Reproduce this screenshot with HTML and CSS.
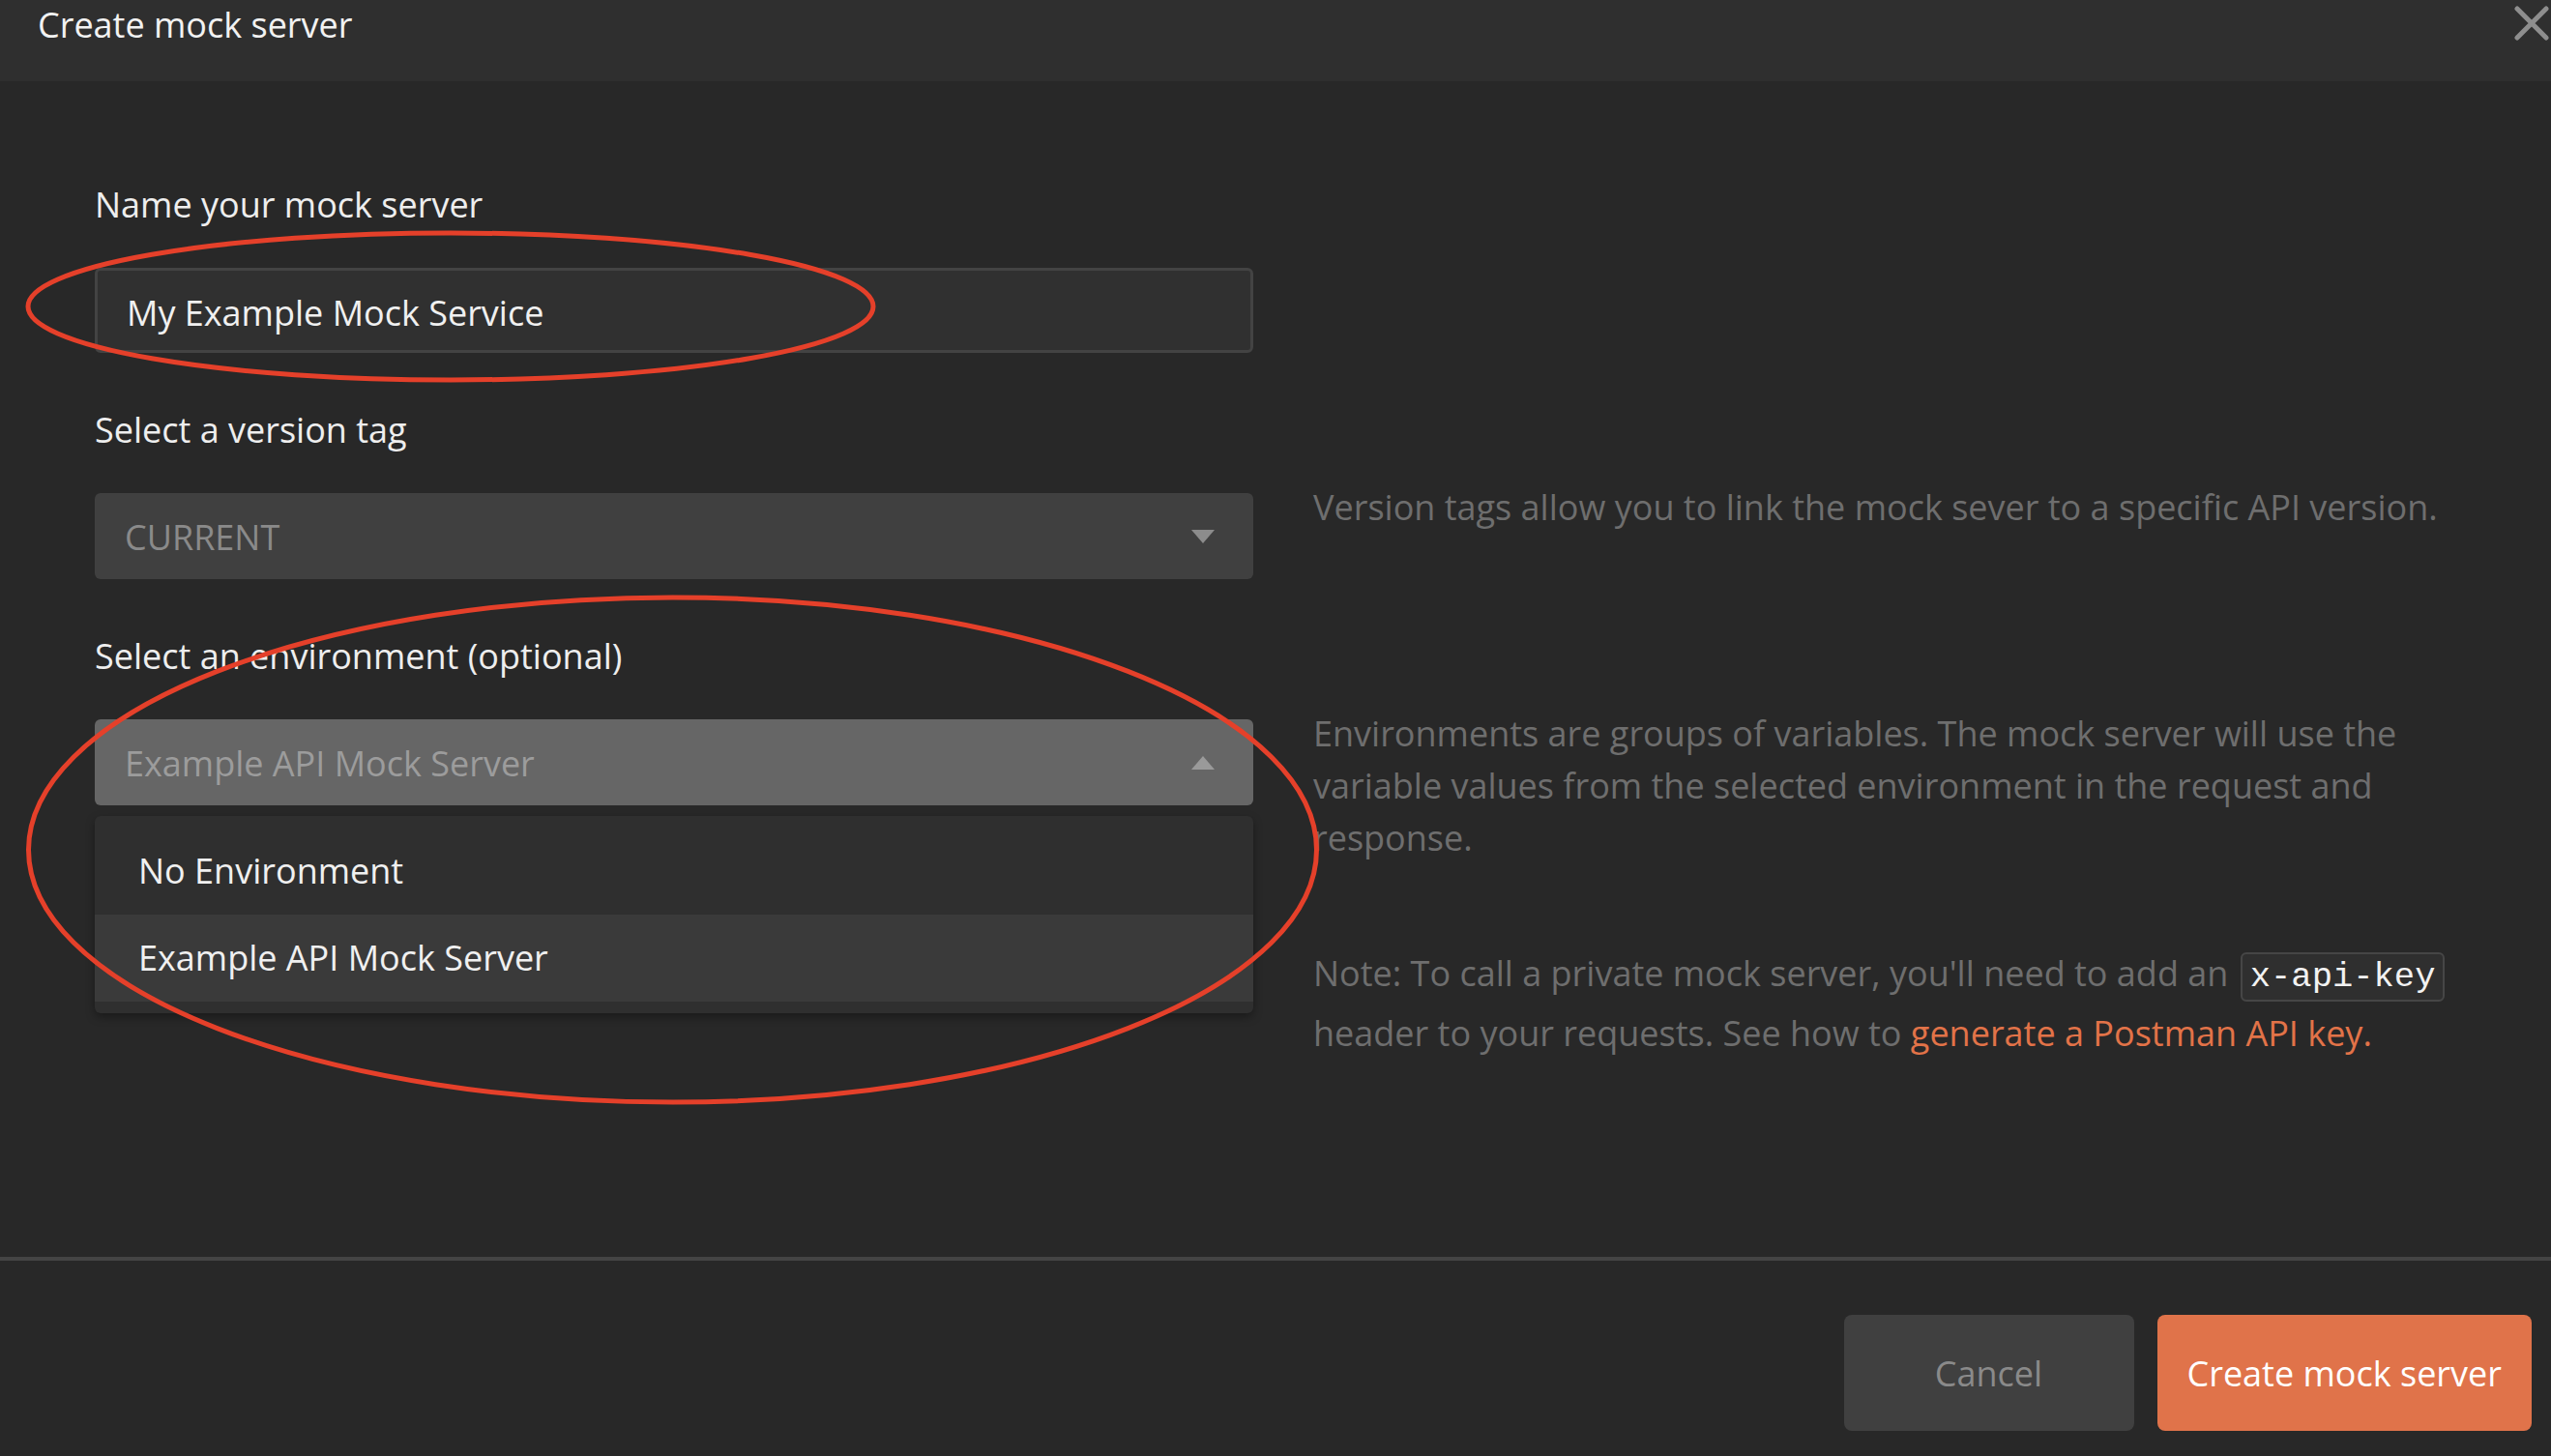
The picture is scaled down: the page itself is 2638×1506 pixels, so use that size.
FILE: index.html
```html
<!DOCTYPE html>
<html lang="en">
<head>
<meta charset="utf-8">
<title>Create mock server</title>
<link rel="stylesheet" href="styles.css">
</head>
<body>
<div class="modal">
  <header class="modal-header">
    <h1 class="modal-title">Create mock server</h1>
    <button class="close-btn" aria-label="Close">
      <svg width="36" height="36" viewBox="0 0 36 36"><path d="M3 3 L33 33 M33 3 L3 33" stroke="#8e8e8e" stroke-width="5" stroke-linecap="round" fill="none"/></svg>
    </button>
  </header>

  <main class="modal-body">
    <section class="field">
      <label class="field-label">Name your mock server</label>
      <div class="field-control">
        <div class="text-input">My Example Mock Service</div>
      </div>
    </section>

    <section class="field">
      <label class="field-label">Select a version tag</label>
      <div class="field-control">
        <div class="select">
          <span class="select-value">CURRENT</span>
          <svg class="caret" width="26" height="14" viewBox="0 0 26 14"><path d="M1 0 H25 L13 14 Z" fill="#8c8c8c"/></svg>
        </div>
      </div>
      <div class="field-help">
        <p>Version tags allow you to link the mock sever to a specific API version.</p>
      </div>
    </section>

    <section class="field">
      <label class="field-label">Select an environment (optional)</label>
      <div class="field-control">
        <div class="select select-open">
          <span class="select-value">Example API Mock Server</span>
          <svg class="caret" width="26" height="14" viewBox="0 0 26 14"><path d="M1 14 H25 L13 0 Z" fill="#9a9a9a"/></svg>
        </div>
        <ul class="menu">
          <li class="menu-item">No Environment</li>
          <li class="menu-item menu-item-active">Example API Mock Server</li>
        </ul>
      </div>
      <div class="field-help">
        <p>Environments are groups of variables. The mock server will use the variable values from the selected environment in the request and response.</p>
        <p class="note">Note: To call a private mock server, you'll need to add an <code class="code">x-api-key</code> header to your requests. See how to <a class="link" href="#">generate a Postman API key.</a></p>
      </div>
    </section>
  </main>

  <footer class="modal-footer">
    <button class="btn btn-secondary">Cancel</button>
    <button class="btn btn-primary">Create mock server</button>
  </footer>

  <svg class="annotations" width="2638" height="1506" viewBox="0 0 2638 1506">
    <ellipse cx="466" cy="317" rx="437" ry="76" fill="none" stroke="#e5402a" stroke-width="5"/>
    <ellipse cx="695.5" cy="879" rx="666" ry="261" fill="none" stroke="#e5402a" stroke-width="5"/>
  </svg>
</div>
</body>
</html>
```

FILE: styles.css
```css
* { box-sizing: border-box; }

html, body {
  margin: 0;
  padding: 0;
  background: #282828;
}

body {
  font-family: "Open Sans", "Noto Sans", sans-serif;
  font-size: 36px;
  color: #eeeeee;
}

.modal {
  position: relative;
  width: 2638px;
  height: 1506px;
  display: flex;
  flex-direction: column;
  overflow: hidden;
}

.modal-header {
  height: 84px;
  flex: none;
  background: #2f2f2f;
  display: flex;
  justify-content: space-between;
  align-items: flex-start;
  padding: 0 2px 0 39px;
}

.modal-title {
  margin: 0;
  font-size: 36px;
  font-weight: 400;
  line-height: 49px;
  margin-top: 1px;
  color: #f2f2f2;
}

.close-btn {
  background: none;
  border: 0;
  padding: 0;
  margin-top: 6px;
  width: 36px;
  height: 36px;
  display: block;
}
.close-btn svg { display: block; }

.modal-body {
  flex: 1;
  padding: 103px 98px 0 98px;
}

.field {
  display: grid;
  grid-template-columns: 1198px 1fr;
  column-gap: 62px;
  margin-bottom: 55px;
}

.field-label {
  grid-column: 1;
  grid-row: 1;
  line-height: 49px;
  margin-bottom: 41px;
  color: #eeeeee;
}

.field-control {
  grid-column: 1;
  grid-row: 2;
  position: relative;
  align-self: start;
}

.field-help {
  grid-column: 2;
  grid-row: 2;
  margin-top: -12px;
  color: #6e6e6e;
  line-height: 54px;
}
.field-help p { margin: 0; }

.text-input {
  height: 88px;
  border: 3px solid #434343;
  border-radius: 6px;
  background: #303030;
  padding: 5px 30px 0 30px;
  line-height: 77px;
  color: #f0f0f0;
}

.select {
  height: 89px;
  border-radius: 6px;
  background: #404040;
  padding: 2px 39px 0 31px;
  display: flex;
  align-items: center;
  justify-content: space-between;
  color: #8a8a8a;
}
.select .caret { display: block; flex: none; margin-top: -2px; }
.select-open {
  background: #666666;
  color: #9c9c9c;
}
.select-value { line-height: 49px; }

.menu {
  position: absolute;
  top: calc(100% + 11px);
  left: 0;
  right: 0;
  margin: 0;
  padding: 12px 0;
  list-style: none;
  background: #2f2f2f;
  border-radius: 6px;
  box-shadow: 0 4px 10px rgba(0, 0, 0, 0.35);
  z-index: 2;
}

.menu-item {
  height: 90px;
  line-height: 90px;
  padding: 0 45px;
  color: #f0f0f0;
}
.menu-item-active { background: #3a3a3a; }

.note {
  margin-top: 82px !important;
  line-height: 62px;
}

.code {
  font-family: "Liberation Mono", "DejaVu Sans Mono", monospace;
  font-size: 35.5px;
  line-height: 40px;
  color: #f2f2f2;
  background: #2f2f2f;
  border: 2px solid #464646;
  border-radius: 6px;
  padding: 3px 8px;
  margin: 0 3px;
}

.link {
  color: #e27348;
  text-decoration: none;
}

.modal-footer {
  flex: none;
  border-top: 4px solid #444444;
  padding: 56px 20px 26px 0;
  display: flex;
  justify-content: flex-end;
  gap: 24px;
}

.btn {
  height: 120px;
  min-width: 300px;
  border: 0;
  border-radius: 8px;
  padding: 0 31px;
  font-family: "Open Sans", "Noto Sans", sans-serif;
  font-size: 36px;
  line-height: 49px;
}
.btn-secondary {
  background: #404040;
  color: #8a8a8a;
}
.btn-primary {
  background: #e0734a;
  color: #ffffff;
}

.annotations {
  position: absolute;
  left: 0;
  top: 0;
  pointer-events: none;
  z-index: 5;
}
```
